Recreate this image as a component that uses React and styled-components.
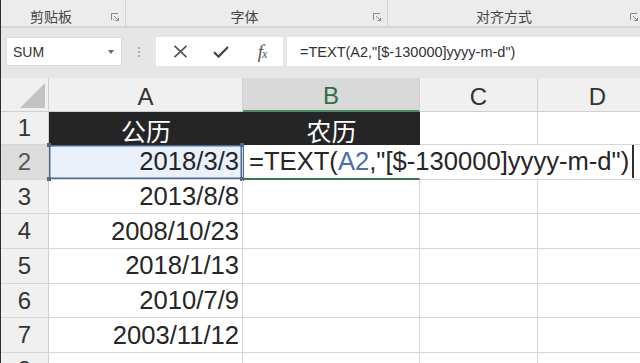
import React from "react";
import styled, { createGlobalStyle } from "styled-components";

const GlobalStyle = createGlobalStyle`
  html, body {
    margin: 0;
    padding: 0;
    background: #ffffff;
    overflow: hidden;
  }
  body {
    font-family: "Liberation Sans", "Noto Sans CJK SC", sans-serif;
  }
`;

const Screen = styled.div`
  width: 639px;
  height: 363px;
  overflow: hidden;
  display: flex;
  flex-direction: column;
  background: #ffffff;
  border-left: 1px solid #2e2e2e;
`;

/* ribbon group captions */
const Ribbon = styled.div`
  height: 21px;
  padding-top: 5px;
  display: grid;
  grid-template-columns: 125px 262px 257px;
  background: #ececec;
  border-bottom: 2px solid #d5d5d5;
  flex-shrink: 0;
`;

const Group = styled.div`
  display: flex;
  align-items: center;
  border-right: 1px solid ${(p) => (p.$last ? "transparent" : "#d3d3d3")};
  margin-top: -5px;
  padding-top: 5px;
`;

const GroupLabel = styled.span`
  flex: 1;
  text-align: center;
  font-family: "Noto Sans CJK SC", sans-serif;
  font-size: 14px;
  color: #444444;
`;

const Launcher = styled.svg`
  width: 8px;
  height: 8px;
  margin: 2px 6px 0 10px;
`;

/* formula bar */
const FormulaBar = styled.div`
  height: 29px;
  padding: 9px 0 12px 5px;
  display: flex;
  background: #e6e6e6;
  flex-shrink: 0;
`;

const NameBox = styled.div`
  width: 116px;
  background: #ffffff;
  border: 1px solid #dcdcdc;
  box-sizing: border-box;
  display: flex;
  align-items: center;
  justify-content: space-between;
  padding: 0 7px 0 6px;
  font-size: 14px;
  color: #333333;
`;

const Caret = styled.span`
  width: 0;
  height: 0;
  border-left: 3.5px solid transparent;
  border-right: 3.5px solid transparent;
  border-top: 4px solid #6a6a6a;
`;

const Grip = styled.div`
  width: 34px;
  display: flex;
  flex-direction: column;
  align-items: center;
  justify-content: center;
  gap: 2px;
  & > span {
    width: 2px;
    height: 2px;
    border-radius: 1px;
    background: #9a9a9a;
  }
`;

const ButtonBox = styled.div`
  width: 127px;
  background: #ffffff;
  display: flex;
  align-items: center;
  padding-left: 6px;
  gap: 5px;
  box-sizing: border-box;
`;

const IconSlot = styled.div`
  width: 36px;
  height: 100%;
  display: flex;
  align-items: center;
  justify-content: center;
  color: #555555;
`;

const Fx = styled.span`
  font-family: "Liberation Serif", serif;
  font-style: italic;
  font-size: 19px;
  color: #555555;
  letter-spacing: -1px;
  & > small {
    font-size: 12px;
  }
`;

const FormulaInput = styled.div`
  flex: 1;
  margin-left: 4px;
  background: #ffffff;
  display: flex;
  align-items: center;
  padding-left: 13px;
  font-size: 14.5px;
  color: #333333;
  white-space: nowrap;
`;

/* worksheet */
const Sheet = styled.div`
  display: grid;
  grid-template-columns: 48px 194px 177px 118px 120px;
  grid-template-rows: 34px 33px repeat(7, 34.7px);
`;

const Corner = styled.div`
  background: #f0f0f0;
  border-right: 1px solid #cfcfcf;
  border-bottom: 1px solid #cfcfcf;
  display: flex;
  align-items: flex-end;
  justify-content: flex-end;
  padding: 0 3px 3px 0;
`;

const ColHead = styled.div`
  background: ${(p) => (p.$active ? "#d9d9d9" : "#f0f0f0")};
  color: ${(p) => (p.$active ? "#2f6e4a" : "#333333")};
  border-right: 1px solid #cfcfcf;
  border-bottom: ${(p) => (p.$active ? "2px solid #4f8a64" : "1px solid #cfcfcf")};
  display: flex;
  align-items: center;
  justify-content: center;
  padding-top: 4px;
  font-size: 24px;
`;

const RowHead = styled.div`
  background: ${(p) => (p.$active ? "#dcdcdc" : "#f0f0f0")};
  color: ${(p) => (p.$active ? "#555555" : "#333333")};
  border-right: 1px solid #cfcfcf;
  border-bottom: 1px solid #d6d6d6;
  display: flex;
  align-items: center;
  justify-content: center;
  font-size: 24px;
`;

const Cell = styled.div`
  position: relative;
  border-right: 1px solid #d6d6d6;
  border-bottom: 1px solid #d6d6d6;
  display: flex;
  align-items: center;
  justify-content: flex-end;
  padding-right: 3px;
  font-size: 25.6px;
  color: #262626;
  white-space: nowrap;
`;

const TitleCell = styled.div`
  background: #252525;
  color: #ffffff;
  display: flex;
  align-items: center;
  justify-content: center;
  padding-top: 3px;
  font-family: "Noto Sans CJK SC", sans-serif;
  font-size: 25px;
  border-bottom: 1px solid #252525;
`;

const RangeCell = styled(Cell)`
  background: #eaf1fa;
  box-shadow: inset 0 0 0 1.5px #4c6a8e;
`;

const Handle = styled.span`
  position: absolute;
  width: 4px;
  height: 4px;
  background: #4c6a8e;
  ${(p) => (p.$top ? "top: -2px;" : "bottom: -2px;")}
  ${(p) => (p.$left ? "left: -2px;" : "right: -2px;")}
`;

const ActiveCell = styled(Cell)`
  border-bottom: 2px solid #3f7453;
`;

const EditBox = styled.div`
  position: absolute;
  left: 0;
  top: 0;
  bottom: 0;
  width: 391px;
  box-sizing: border-box;
  background: #ffffff;
  border-left: 1.5px solid #4c6a8e;
  border-right: 2px solid #2d2d2d;
  display: flex;
  align-items: center;
  padding-left: 5px;
  font-size: 25.6px;
  color: #262626;
  z-index: 2;
`;

const Ref = styled.span`
  color: #4a6fa8;
`;

const dates = ["2013/8/8", "2008/10/23", "2018/1/13", "2010/7/9", "2003/11/12", ""];

function LauncherIcon() {
  return (
    <Launcher viewBox="0 0 8 8">
      <path d="M0.5 7V0.5H7" fill="none" stroke="#8a8a8a" strokeWidth="1" />
      <path d="M3 3L7.5 7.5M7.5 4.5V7.5H4.5" fill="none" stroke="#8a8a8a" strokeWidth="1" />
    </Launcher>
  );
}

export default function App() {
  return (
    <>
      <GlobalStyle />
      <Screen>
        <Ribbon>
          <Group>
            <GroupLabel>剪贴板</GroupLabel>
            <LauncherIcon />
          </Group>
          <Group>
            <GroupLabel>字体</GroupLabel>
            <LauncherIcon />
          </Group>
          <Group $last>
            <GroupLabel>对齐方式</GroupLabel>
            <LauncherIcon />
          </Group>
        </Ribbon>

        <FormulaBar>
          <NameBox>
            SUM
            <Caret />
          </NameBox>
          <Grip>
            <span />
            <span />
            <span />
          </Grip>
          <ButtonBox>
            <IconSlot>
              <svg width="15" height="13" viewBox="0 0 15 13">
                <path d="M1.5 0.8L13.5 12.2M13.5 0.8L1.5 12.2" stroke="#505050" strokeWidth="1.6" fill="none" />
              </svg>
            </IconSlot>
            <IconSlot>
              <svg width="16" height="12" viewBox="0 0 16 12">
                <path d="M1 6.2L5.6 10.6L15 1" stroke="#444444" strokeWidth="2.2" fill="none" />
              </svg>
            </IconSlot>
            <IconSlot>
              <Fx>
                f<small>x</small>
              </Fx>
            </IconSlot>
          </ButtonBox>
          <FormulaInput>=TEXT(A2,"[$-130000]yyyy-m-d")</FormulaInput>
        </FormulaBar>

        <Sheet>
          <Corner>
            <svg width="25" height="25" viewBox="0 0 25 25">
              <path d="M25 0V25H0Z" fill="#c2c2c2" />
            </svg>
          </Corner>
          <ColHead>A</ColHead>
          <ColHead $active>B</ColHead>
          <ColHead>C</ColHead>
          <ColHead>D</ColHead>

          <RowHead>1</RowHead>
          <TitleCell>公历</TitleCell>
          <TitleCell>农历</TitleCell>
          <Cell />
          <Cell />

          <RowHead $active>2</RowHead>
          <RangeCell>
            2018/3/3
            <Handle $top $left />
            <Handle $top />
            <Handle $left />
            <Handle />
          </RangeCell>
          <ActiveCell>
            <EditBox>
              =TEXT(<Ref>A2</Ref>,"[$-130000]yyyy-m-d")
            </EditBox>
          </ActiveCell>
          <Cell />
          <Cell />

          {dates.map((d, i) => (
            <React.Fragment key={i}>
              <RowHead>{i + 3}</RowHead>
              <Cell>{d}</Cell>
              <Cell />
              <Cell />
              <Cell />
            </React.Fragment>
          ))}
        </Sheet>
      </Screen>
    </>
  );
}
